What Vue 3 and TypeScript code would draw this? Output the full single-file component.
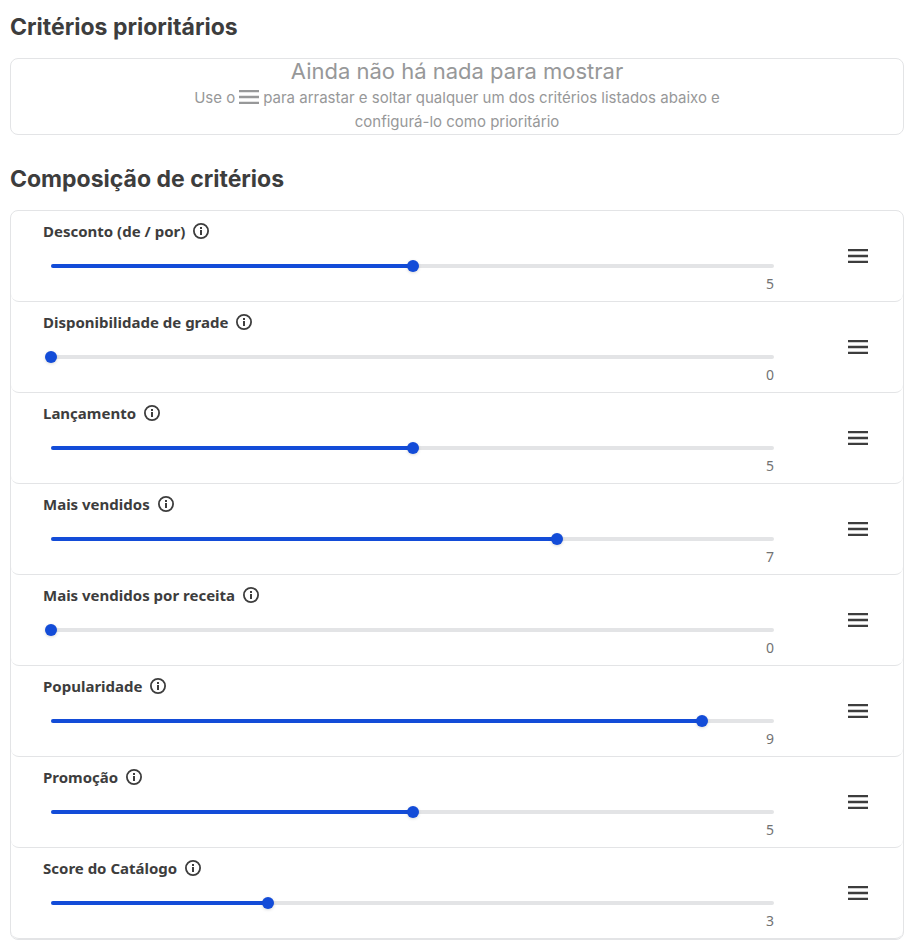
<script setup lang="ts">
import { ref } from 'vue'

interface Criterion {
  id: string
  name: string
  weight: number
}

const MAX_WEIGHT = 10

const criteria = ref<Criterion[]>([
  { id: 'desconto', name: 'Desconto (de / por)', weight: 5 },
  { id: 'grade', name: 'Disponibilidade de grade', weight: 0 },
  { id: 'lancamento', name: 'Lançamento', weight: 5 },
  { id: 'mais-vendidos', name: 'Mais vendidos', weight: 7 },
  { id: 'receita', name: 'Mais vendidos por receita', weight: 0 },
  { id: 'popularidade', name: 'Popularidade', weight: 9 },
  { id: 'promocao', name: 'Promoção', weight: 5 },
  { id: 'score', name: 'Score do Catálogo', weight: 3 },
])
</script>

<template>
  <main class="page">
    <section>
      <h2 class="heading">Critérios prioritários</h2>
      <div class="panel empty">
        <p class="empty-title">Ainda não há nada para mostrar</p>
        <p class="empty-text">
          Use o<svg class="inline-grip" viewBox="0 0 20 14" aria-hidden="true">
            <path d="M0 0h20v2.3H0zM0 5.7h20v2.6H0zM0 11.7h20V14H0z" fill="currentColor" />
          </svg>para arrastar e soltar qualquer um dos critérios listados abaixo e configurá-lo como prioritário
        </p>
      </div>
    </section>

    <section>
      <h2 class="heading">Composição de critérios</h2>
      <ul class="panel list">
        <li v-for="item in criteria" :key="item.id" class="row">
          <div class="body">
            <div class="title">
              <label class="name" :for="item.id">{{ item.name }}</label>
              <button type="button" class="icon-button" :aria-label="'Informações: ' + item.name">
                <svg class="info" viewBox="0 0 16 16" aria-hidden="true">
                  <circle cx="8" cy="8" r="7.1" fill="none" stroke="currentColor" stroke-width="1.8" />
                  <path d="M7 4h2v2H7zM7 7h2v5H7z" fill="currentColor" />
                </svg>
              </button>
            </div>
            <div class="slider">
              <div class="track">
                <div class="fill" :style="{ width: (item.weight / MAX_WEIGHT) * 100 + '%' }"></div>
              </div>
              <input
                :id="item.id"
                v-model.number="item.weight"
                class="range"
                type="range"
                min="0"
                :max="MAX_WEIGHT"
                step="1"
              />
            </div>
            <output class="value" :for="item.id">{{ item.weight }}</output>
          </div>
          <button type="button" class="icon-button" :aria-label="'Arrastar: ' + item.name">
            <svg class="grip" viewBox="0 0 20 14" aria-hidden="true">
              <path d="M0 0h20v2.3H0zM0 5.7h20v2.6H0zM0 11.7h20V14H0z" fill="currentColor" />
            </svg>
          </button>
        </li>
      </ul>
    </section>
  </main>
</template>

<style>
body {
  margin: 0;
  background: #fff;
}
</style>

<style scoped>
.page {
  display: flex;
  flex-direction: column;
  gap: 28px;
  padding: 11px 8px 4px 10px;
  color: #3d3d3d;
  font-family: Inter, "Noto Sans", sans-serif;
}

.heading {
  margin: 0 0 15px;
  font-size: 23px;
  font-weight: 700;
  line-height: 32px;
}

.panel {
  border: 1px solid #e3e4e6;
  border-radius: 8px;
}

.empty {
  display: flex;
  flex-direction: column;
  gap: 3px;
  align-items: center;
  color: #979899;
  text-align: center;
}

.empty-title {
  margin: 0;
  font-size: 22px;
  line-height: 24px;
}

.empty-text {
  max-width: 560px;
  margin: 0;
  font-size: 15px;
  line-height: 24px;
}

.inline-grip {
  width: 20px;
  height: 14px;
  margin: 0 4px;
  vertical-align: -1px;
}

.list {
  margin: 0;
  padding: 0;
  list-style: none;
}

.row {
  display: flex;
  align-items: center;
  box-sizing: border-box;
  height: 91px;
  padding: 0 35px 0 32px;
  border-bottom: 1px solid #e3e4e6;
  border-radius: 8px;
}

.body {
  display: flex;
  flex: 1;
  flex-direction: column;
  padding: 0 74px 0 8px;
}

.title {
  display: flex;
  align-items: center;
  gap: 8px;
  height: 24px;
  margin-left: -8px;
}

.name {
  font-family: "Noto Sans", sans-serif;
  font-size: 15px;
  font-weight: 700;
  line-height: 24px;
}

.icon-button {
  display: flex;
  padding: 0;
  border: 0;
  background: none;
  color: #3d3d3d;
  cursor: pointer;
}

.info {
  width: 16px;
  height: 16px;
}

.grip {
  width: 20px;
  height: 14px;
}

.slider {
  display: grid;
  align-items: center;
  height: 18px;
  margin: 14px -6px 0;
}

.track,
.range {
  grid-area: 1 / 1;
}

.track {
  height: 4px;
  margin: 0 6px;
  overflow: hidden;
  border-radius: 2px;
  background: #e3e4e6;
}

.fill {
  height: 100%;
  background: #134cd8;
}

.range {
  width: 100%;
  height: 12px;
  margin: 0;
  appearance: none;
  background: transparent;
  cursor: pointer;
}

.range::-webkit-slider-thumb {
  width: 12px;
  height: 12px;
  appearance: none;
  border: 0;
  border-radius: 50%;
  background: #134cd8;
  box-shadow: 0 1px 3px rgba(61, 62, 64, 0.2);
}

.value {
  color: #727273;
  font-family: "Noto Sans", sans-serif;
  font-size: 14px;
  line-height: 18px;
  text-align: right;
}
</style>
